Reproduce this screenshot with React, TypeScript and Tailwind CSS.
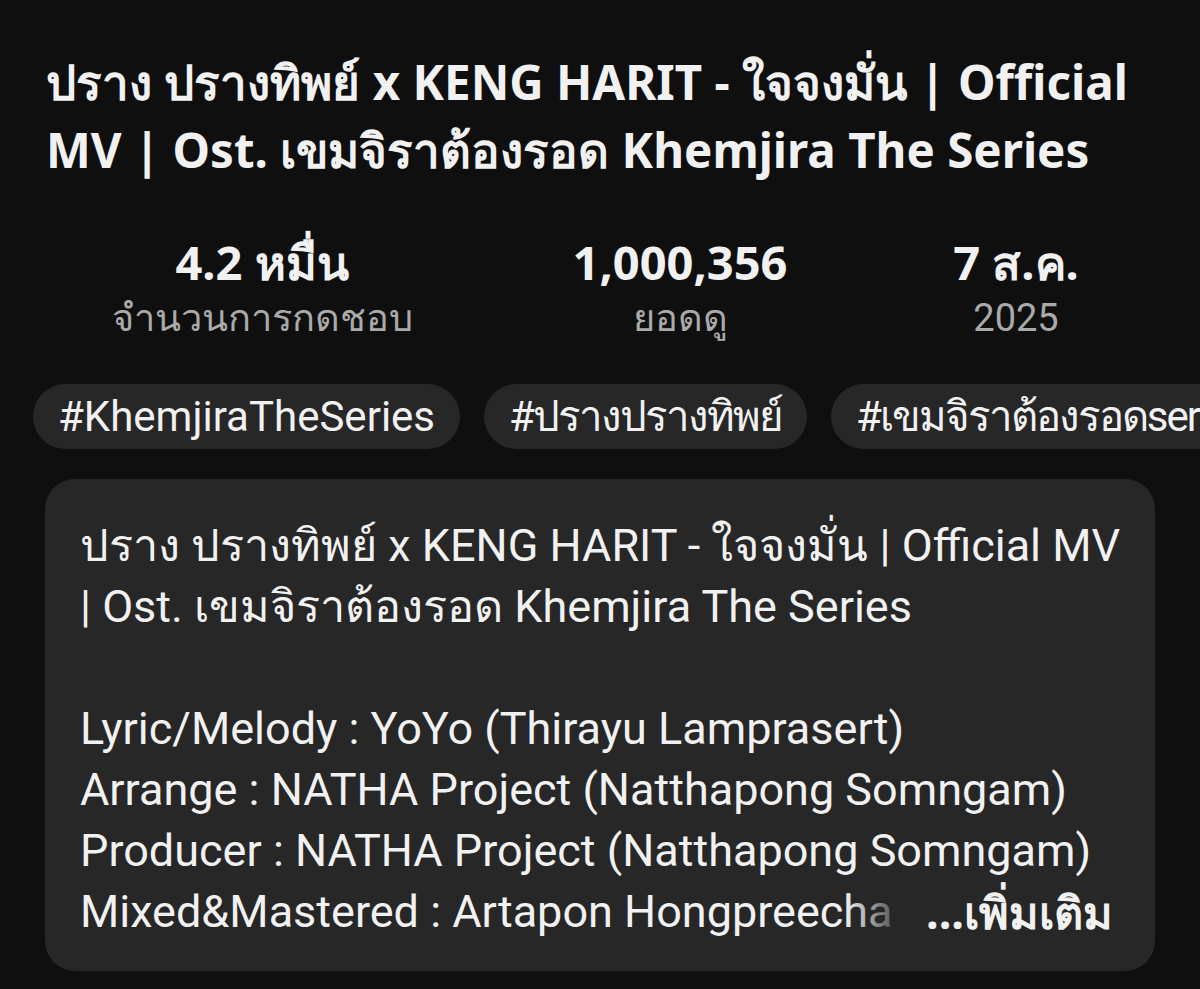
import React from 'react';

const stats = [
  { value: '4.2 หมื่น', label: 'จำนวนการกดชอบ', box: 'w-[324px]' },
  { value: '1,000,356', label: 'ยอดดู', box: 'ml-[92px] w-[328px]' },
  { value: '7 ส.ค.', label: '2025', box: 'ml-[76px] w-[192px]' },
];

// Thai tags get slightly tighter tracking so the fallback face isn't too wide
const tags = [
  { text: '#KhemjiraTheSeries', track: '' },
  { text: '#ปรางปรางทิพย์', track: 'tracking-[-2px]' },
  { text: '#เขมจิราต้องรอดseries', track: 'tracking-[-2px]' },
];

const credits = [
  'Lyric/Melody : YoYo (Thirayu Lamprasert)',
  'Arrange : NATHA Project (Natthapong Somngam)',
  'Producer : NATHA Project (Natthapong Somngam)',
];

export default function App() {
  return (
    <div className="w-[1200px] h-[989px] overflow-hidden bg-[#0f0f0f] text-white font-['Roboto','Noto_Sans',sans-serif]">
      {/* Video title */}
      <h1 className="px-[46px] pt-[48px] text-[47.5px] leading-[68px] font-bold text-[#f1f1f1] whitespace-nowrap font-['Noto_Sans','Open_Sans',sans-serif]">
        ปราง ปรางทิพย์ x KENG HARIT - ใจจงมั่น | Official
        <br />
        MV | Ost. เขมจิราต้องรอด Khemjira The Series
      </h1>

      {/* Likes / views / date */}
      <div className="mt-[50px] flex pl-[100px]">
        {stats.map((s) => (
          <div key={s.label} className={`${s.box} flex flex-col items-center`}>
            <span className="text-[47px] leading-[56px] font-bold text-[#f1f1f1] font-['Noto_Sans',sans-serif]">{s.value}</span>
            <span className="text-[38px] leading-[56px] text-[#aaaaaa]">{s.label}</span>
          </div>
        ))}
      </div>

      {/* Hashtag chips */}
      <div className="mt-[38px] flex gap-[24px] pl-[33px] overflow-hidden whitespace-nowrap">
        {tags.map((t) => (
          <div key={t.text} className={`shrink-0 h-[65px] px-[25px] rounded-full bg-[#272727] flex items-center text-[42px] text-[#f1f1f1] ${t.track}`}>
            {t.text}
          </div>
        ))}
      </div>

      {/* Description card */}
      <div className="mt-[30px] mx-[45px] rounded-[30px] bg-[#272727] pl-[35px] pr-[42px] pt-[36px] pb-[29px] text-[45px] leading-[61px] text-[#f1f1f1] whitespace-nowrap">
        <p>ปราง ปรางทิพย์ x KENG HARIT - ใจจงมั่น | Official MV</p>
        <p>| Ost. เขมจิราต้องรอด Khemjira The Series</p>
        <p>&nbsp;</p>
        {credits.map((c) => (
          <p key={c}>{c}</p>
        ))}
        <div className="flex items-center">
          <div className="relative flex-1 min-w-0 overflow-hidden">
            <span className="relative">
              Mixed&amp;Mastered : Artapon Hongpreecha
              <span className="absolute inset-y-0 right-0 w-[48px] bg-gradient-to-r from-transparent to-[#272727]/75" />
            </span>
          </div>
          <span className="shrink-0 ml-[30px] font-bold font-['Noto_Sans',sans-serif]">...เพิ่มเติม</span>
        </div>
      </div>
    </div>
  );
}
